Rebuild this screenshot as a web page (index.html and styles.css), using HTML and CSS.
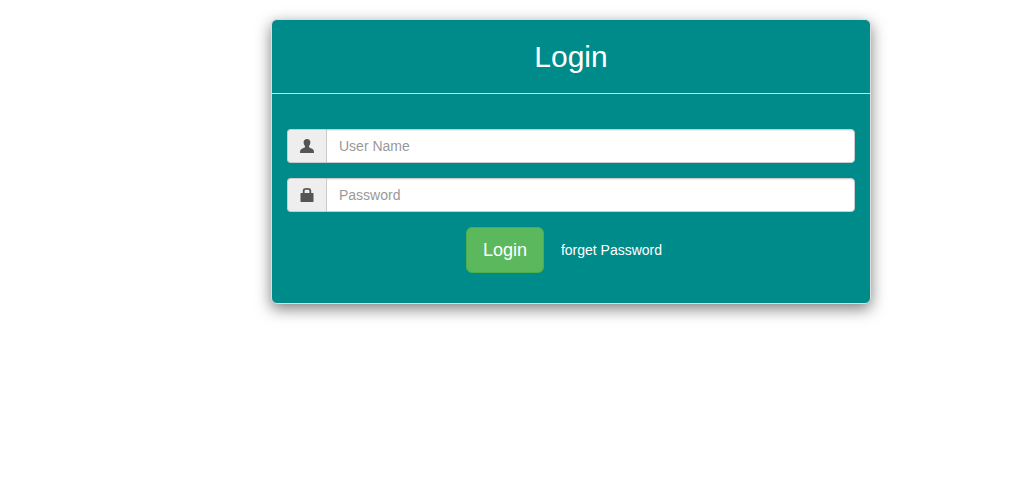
FILE: index.html
```html
<!DOCTYPE html>
<html lang="en">
<head>
    <meta charset="UTF-8">
    <meta name="viewport" content="width=device-width, initial-scale=1.0">
    <title>Login</title>
    <link rel="stylesheet" href="styles.css">
</head>
<body>
    <div class="panel">
        <div class="panel-heading">Login</div>
        <form class="panel-body">
            <div class="input-group">
                <span class="addon">
                    <svg class="icon" viewBox="0 0 14 14"><path d="M7 0C4.800 0 3.600 1.300 3.600 3.200c0 1.500.7 3 1.400 3.800v1.200L1.500 10C.5 10.500 0 11.500 0 14h14c0-2.500-.5-3.500-1.500-4L9 8.200V7c.7-.8 1.400-2.300 1.400-3.800C10.400 1.300 9.200 0 7 0z"/></svg>
                </span>
                <input class="field" type="text" placeholder="User Name">
            </div>
            <div class="input-group">
                <span class="addon">
                    <svg class="icon" viewBox="0 0 14 14"><path fill-rule="evenodd" d="M2.800 5V2.500C2.800 .8 4 0 7 0s4.200 .8 4.200 2.500V5h1.800c.3 0 .5.2.5.5v8c0 .3-.2.5-.5.5H1c-.3 0-.5-.2-.5-.5v-8c0-.3.2-.5.5-.5zM4.600 5h4.800V2.800c0-.8-.7-1.100-2.400-1.100s-2.400.3-2.400 1.100z"/></svg>
                </span>
                <input class="field" type="password" placeholder="Password">
            </div>
            <div class="actions">
                <button class="btn" type="button">Login</button>
                <a class="forgot" href="#">forget Password</a>
            </div>
        </form>
    </div>
</body>
</html>
```

FILE: styles.css
```css
body {
    box-sizing: border-box;
    min-height: 100vh;
    margin: 0;
    padding: 19px 0 0 271px;
    background-color: #ffffff;
    font-family: "Liberation Sans", Arial, sans-serif;
    font-size: 14px;
    color: #333333;
}
.panel {
    box-sizing: border-box;
    width: 600px;
    height: 285px;
    background-color: #008b8b;
    border: 1px solid #dddddd;
    border-radius: 6px;
    box-shadow: 0 5px 15px rgba(0, 0, 0, 0.5);
    overflow: hidden;
}
.panel-heading {
    height: 74px;
    box-sizing: border-box;
    border-bottom: 1px solid #dddddd;
    padding-top: 18px;
    text-align: center;
    font-size: 30px;
    line-height: 37px;
    color: #ffffff;
}
.panel-body {
    padding: 35px 15px 0;
}
.input-group {
    display: flex;
    height: 34px;
    margin-bottom: 15px;
}
.addon {
    box-sizing: border-box;
    width: 39px;
    display: flex;
    align-items: center;
    justify-content: center;
    background-color: #eeeeee;
    border: 1px solid #cccccc;
    border-right: 0;
    border-radius: 4px 0 0 4px;
}
.icon {
    width: 14px;
    height: 14px;
    fill: #555555;
}
.field {
    flex: 1;
    min-width: 0;
    box-sizing: border-box;
    padding: 6px 12px;
    background-color: #ffffff;
    border: 1px solid #cccccc;
    border-radius: 0 4px 4px 0;
    font-family: inherit;
    font-size: 14px;
    color: #555555;
    box-shadow: inset 0 1px 1px rgba(0, 0, 0, 0.075);
}
.field::placeholder {
    color: #999999;
    opacity: 1;
}
.actions {
    display: flex;
    align-items: center;
    justify-content: center;
    gap: 17px;
    padding-right: 14px;
}
.btn {
    width: 78px;
    height: 46px;
    padding: 0;
    background-color: #5cb85c;
    border: 1px solid #4cae4c;
    border-radius: 6px;
    font-family: inherit;
    font-size: 18px;
    color: #ffffff;
}
.forgot {
    color: #ffffff;
    text-decoration: none;
}
```
